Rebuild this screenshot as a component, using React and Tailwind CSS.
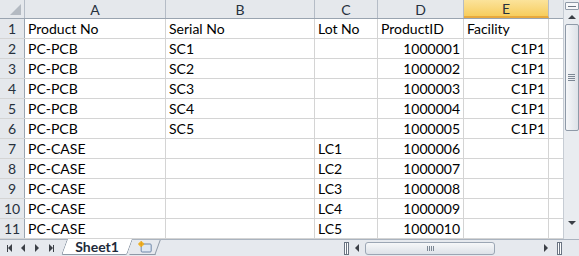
import React from 'react'

const cols = [
  { key: 'A', w: 'w-[141px]' },
  { key: 'B', w: 'w-[149px]' },
  { key: 'C', w: 'w-[63px]' },
  { key: 'D', w: 'w-[86px]' },
  { key: 'E', w: 'w-[85px]' },
]

const rows = [
  ['Product No', 'Serial No', 'Lot No', 'ProductID', 'Facility'],
  ['PC-PCB', 'SC1', '', '1000001', 'C1P1'],
  ['PC-PCB', 'SC2', '', '1000002', 'C1P1'],
  ['PC-PCB', 'SC3', '', '1000003', 'C1P1'],
  ['PC-PCB', 'SC4', '', '1000004', 'C1P1'],
  ['PC-PCB', 'SC5', '', '1000005', 'C1P1'],
  ['PC-CASE', '', 'LC1', '1000006', ''],
  ['PC-CASE', '', 'LC2', '1000007', ''],
  ['PC-CASE', '', 'LC3', '1000008', ''],
  ['PC-CASE', '', 'LC4', '1000009', ''],
  ['PC-CASE', '', 'LC5', '1000010', ''],
]

function Cell({ col, value, right }) {
  return (
    <div
      className={`${col.w} h-full shrink-0 border-r border-[#d4d4d4] px-[3px] flex items-center overflow-hidden whitespace-nowrap ${
        right ? 'justify-end' : ''
      }`}
    >
      {value}
    </div>
  )
}

function VScroll() {
  return (
    <div className="w-[16px] shrink-0 bg-[#e9ecf0] border-l border-[#c6ccd4] flex flex-col items-center">
      <div className="mt-[2px] w-[14px] h-[8px] border border-[#8f9aa8] bg-[#f6f7f9] rounded-[1px] flex items-center justify-center">
        <div className="w-[8px] h-[1px] bg-[#6a7482]" />
      </div>
      <div className="mt-[5px] w-0 h-0 border-l-[4px] border-r-[4px] border-b-[4px] border-l-transparent border-r-transparent border-b-[#3c4047]" />
      <div className="mt-[5px] w-[14px] h-[107px] rounded-[2px] border border-[#8f9aa8] bg-gradient-to-r from-[#f6f7f9] to-[#dde2e8] flex flex-col items-center justify-center gap-[1px]">
        <div className="w-[7px] h-[1px] bg-[#7c8794]" />
        <div className="w-[7px] h-[1px] bg-[#7c8794]" />
        <div className="w-[7px] h-[1px] bg-[#7c8794]" />
        <div className="w-[7px] h-[1px] bg-[#7c8794]" />
      </div>
      <div className="flex-1" />
      <div className="mb-[14px] w-0 h-0 border-l-[4px] border-r-[4px] border-t-[4px] border-l-transparent border-r-transparent border-t-[#3c4047]" />
    </div>
  )
}

function NavArrow({ dir, bar }) {
  return (
    <div className="w-[14px] h-full flex items-center justify-center">
      {bar === 'left' && <div className="w-[1px] h-[7px] bg-[#3c4047]" />}
      {dir === 'left' ? (
        <div className="w-0 h-0 border-t-[4px] border-b-[4px] border-r-[4px] border-t-transparent border-b-transparent border-r-[#3c4047]" />
      ) : (
        <div className="w-0 h-0 border-t-[4px] border-b-[4px] border-l-[4px] border-t-transparent border-b-transparent border-l-[#3c4047]" />
      )}
      {bar === 'right' && <div className="w-[1px] h-[7px] bg-[#3c4047]" />}
    </div>
  )
}

function SplitBox({ className = '' }) {
  return (
    <div className={`w-[5px] h-[13px] my-auto border border-[#6a7482] bg-white flex justify-center ${className}`}>
      <div className="w-[1px] h-full bg-[#6a7482]" />
    </div>
  )
}

function BottomBar() {
  return (
    <div className="h-[17px] w-full flex items-stretch bg-[#e6e9ee] border-t border-[#aab3bf]">
      <div className="w-[58px] flex items-center pl-[2px]">
        <NavArrow dir="left" bar="left" />
        <NavArrow dir="left" />
        <NavArrow dir="right" />
        <NavArrow dir="right" bar="right" />
      </div>
      <div className="w-[66px] h-[16px] -mt-[1px] bg-white border-x border-b border-[#8e99a7] rounded-b-[2px] flex items-center justify-center font-bold text-[14px] text-[#1e2a3a] skew-x-[-20deg] ml-[6px]">
        <span className="skew-x-[20deg]">Sheet1</span>
      </div>
      <div className="w-[26px] h-[15px] ml-[2px] border-r border-b border-[#8e99a7] skew-x-[-20deg] flex items-center justify-center">
        <svg width="16" height="12" viewBox="0 0 16 12" className="skew-x-[20deg]">
          <rect x="4" y="3" width="10" height="8" rx="1" fill="#dfe8f3" stroke="#6f87a8" />
          <circle cx="4" cy="3" r="2.5" fill="#f6c33b" />
          <path d="M4 0v6M1 3h6" stroke="#e29b16" strokeWidth="1" />
        </svg>
      </div>
      <div className="w-[186px]" />
      <SplitBox />
      <div className="w-[16px] flex items-center justify-center">
        <div className="w-0 h-0 border-t-[4px] border-b-[4px] border-r-[4px] border-t-transparent border-b-transparent border-r-[#3c4047]" />
      </div>
      <div className="w-[130px] h-[13px] my-auto rounded-[3px] border border-[#9ba6b4] bg-gradient-to-b from-[#f6f7f9] to-[#dde2e8] flex items-center justify-center gap-[1px]">
        <div className="w-[1px] h-[5px] bg-[#7c8794]" />
        <div className="w-[1px] h-[5px] bg-[#7c8794]" />
        <div className="w-[1px] h-[5px] bg-[#7c8794]" />
        <div className="w-[1px] h-[5px] bg-[#7c8794]" />
      </div>
      <div className="flex-1 flex items-center justify-end pr-[2px]">
        <div className="w-0 h-0 border-t-[4px] border-b-[4px] border-l-[4px] border-t-transparent border-b-transparent border-l-[#3c4047]" />
      </div>
      <SplitBox className="ml-[7px] mr-[17px]" />
    </div>
  )
}

export default function App() {
  return (
    <div
      className="w-[579px] h-[256px] flex flex-col bg-white overflow-hidden text-[14px] text-black"
      style={{ fontFamily: 'Lato, "Open Sans", sans-serif' }}
    >
      <div className="flex flex-1 min-h-0">
        <div className="flex-1 flex flex-col min-w-0">
          <div className="h-[19px] flex shrink-0 bg-[#e5e8ec] border-b border-[#9aa4b0] text-[#27313d]">
            <div className="w-[25px] shrink-0 h-full border-r border-[#b5bcc6] relative">
              <div className="absolute right-[3px] bottom-[3px] w-0 h-0 border-l-[11px] border-b-[11px] border-l-transparent border-b-[#b4bac2]" />
            </div>
            {cols.map((c) => (
              <div
                key={c.key}
                className={`${c.w} shrink-0 h-full border-r border-[#b5bcc6] flex items-center justify-center ${
                  c.key === 'E'
                    ? 'bg-gradient-to-b from-[#fbe39a] to-[#f7cd5c] border-b-2 border-b-[#e8a93d]'
                    : ''
                }`}
              >
                {c.key}
              </div>
            ))}
            <div className="flex-1" />
          </div>
          {rows.map((r, i) => (
            <div key={i} className="h-[20px] flex shrink-0 border-b border-[#d4d4d4]">
              <div className="w-[25px] shrink-0 h-full bg-[#e5e8ec] border-r border-[#9aa4b0] flex items-center justify-center text-[#27313d]">
                {i + 1}
              </div>
              {cols.map((c, j) => (
                <Cell key={c.key} col={c} value={r[j]} right={i > 0 && (c.key === 'D' || c.key === 'E')} />
              ))}
              <div className="flex-1" />
            </div>
          ))}
        </div>
        <VScroll />
      </div>
      <BottomBar />
    </div>
  )
}
